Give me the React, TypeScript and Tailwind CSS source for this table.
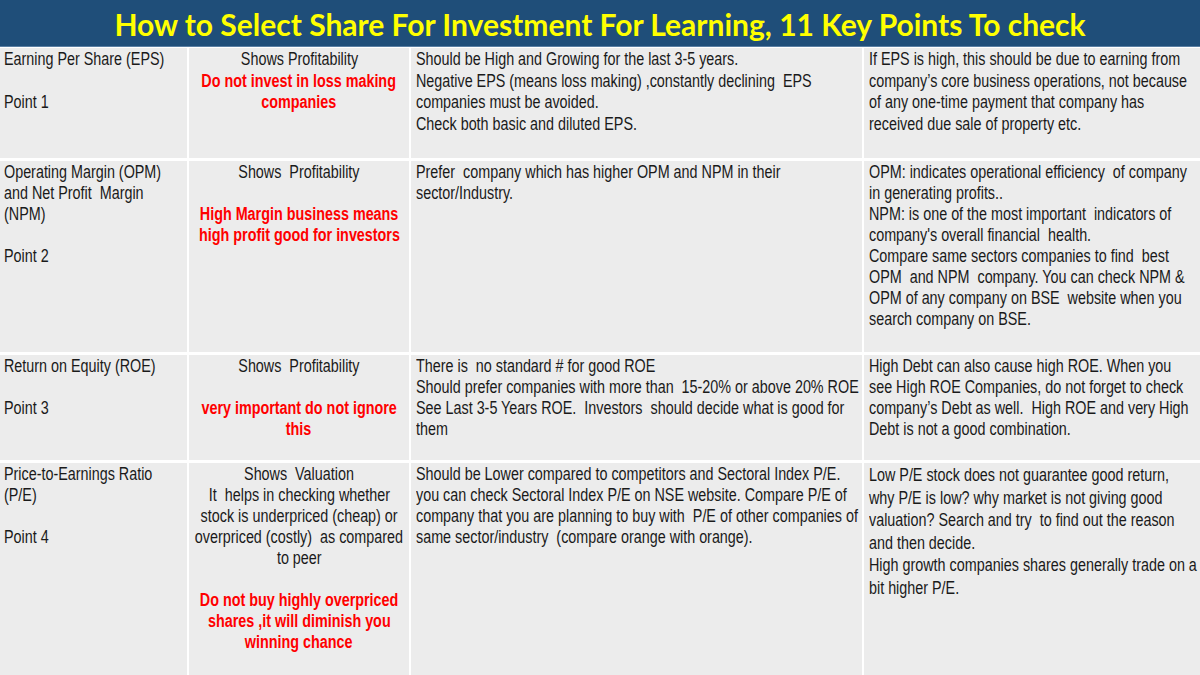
const body = '"Liberation Sans", Arial, sans-serif';

type Line = { t: string; red?: boolean };

const rows: { h: string; lh: string; lastLh?: string; cells: Line[][] }[] = [
  {
    h: "h-[110px]",
    lh: "leading-[21.5px]",
    cells: [
      [{ t: "Earning Per Share (EPS)" }, { t: "" }, { t: "Point 1" }],
      [
        { t: "Shows Profitability" },
        { t: "Do not invest in loss making", red: true },
        { t: "companies", red: true },
      ],
      [
        { t: "Should be High and Growing for the last 3-5 years." },
        { t: "Negative EPS (means loss making) ,constantly declining  EPS" },
        { t: "companies must be avoided." },
        { t: "Check both basic and diluted EPS." },
      ],
      [
        { t: "If EPS is high, this should be due to earning from" },
        { t: "company’s core business operations, not because" },
        { t: "of any one-time payment that company has" },
        { t: "received due sale of property etc." },
      ],
    ],
  },
  {
    h: "h-[191px]",
    lh: "leading-[21px]",
    cells: [
      [
        { t: "Operating Margin (OPM)" },
        { t: "and Net Profit  Margin" },
        { t: "(NPM)" },
        { t: "" },
        { t: "Point 2" },
      ],
      [
        { t: "Shows  Profitability" },
        { t: "" },
        { t: "High Margin business means", red: true },
        { t: "high profit good for investors", red: true },
      ],
      [
        { t: "Prefer  company which has higher OPM and NPM in their" },
        { t: "sector/Industry." },
      ],
      [
        { t: "OPM: indicates operational efficiency  of company" },
        { t: "in generating profits.." },
        { t: "NPM: is one of the most important  indicators of" },
        { t: "company's overall financial  health." },
        { t: "Compare same sectors companies to find  best" },
        { t: "OPM  and NPM  company. You can check NPM &" },
        { t: "OPM of any company on BSE  website when you" },
        { t: "search company on BSE." },
      ],
    ],
  },
  {
    h: "h-[105px]",
    lh: "leading-[21px]",
    cells: [
      [{ t: "Return on Equity (ROE)" }, { t: "" }, { t: "Point 3" }],
      [
        { t: "Shows  Profitability" },
        { t: "" },
        { t: "very important do not ignore", red: true },
        { t: "this", red: true },
      ],
      [
        { t: "There is  no standard # for good ROE" },
        { t: "Should prefer companies with more than  15-20% or above 20% ROE" },
        { t: "See Last 3-5 Years ROE.  Investors  should decide what is good for" },
        { t: "them" },
      ],
      [
        { t: "High Debt can also cause high ROE. When you" },
        { t: "see High ROE Companies, do not forget to check" },
        { t: "company’s Debt as well.  High ROE and very High" },
        { t: "Debt is not a good combination." },
      ],
    ],
  },
  {
    h: "flex-1",
    lh: "leading-[21px]",
    lastLh: "leading-[22.5px]",
    cells: [
      [{ t: "Price-to-Earnings Ratio" }, { t: "(P/E)" }, { t: "" }, { t: "Point 4" }],
      [
        { t: "Shows  Valuation" },
        { t: "It  helps in checking whether" },
        { t: "stock is underpriced (cheap) or" },
        { t: "overpriced (costly)  as compared" },
        { t: "to peer" },
        { t: "" },
        { t: "Do not buy highly overpriced", red: true },
        { t: "shares ,it will diminish you", red: true },
        { t: "winning chance", red: true },
      ],
      [
        { t: "Should be Lower compared to competitors and Sectoral Index P/E." },
        { t: "you can check Sectoral Index P/E on NSE website. Compare P/E of" },
        { t: "company that you are planning to buy with  P/E of other companies of" },
        { t: "same sector/industry  (compare orange with orange)." },
      ],
      [
        { t: "Low P/E stock does not guarantee good return," },
        { t: "why P/E is low? why market is not giving good" },
        { t: "valuation? Search and try  to find out the reason" },
        { t: "and then decide." },
        { t: "High growth companies shares generally trade on a" },
        { t: "bit higher P/E." },
      ],
    ],
  },
];

const widths = ["w-[187px] shrink-0", "w-[220px] shrink-0", "w-[451px] shrink-0", "flex-1 min-w-0"];

// the source uses a narrow face; squeeze regular Arial-width text to match
function Cell({ lines, idx, lh }: { lines: Line[]; idx: number; lh: string }) {
  const centered = idx === 1;
  return (
    <div
      className={`${widths[idx]} bg-[#ececec] pt-[1px] ${centered ? "" : idx === 0 ? "pl-[4px]" : "pl-[5px]"} ${lh}`}
    >
      {lines.map((l, i) => (
        <div key={i} className={`flex ${centered ? "justify-center" : "justify-start"}`}>
          <span
            className={`whitespace-pre shrink-0 scale-x-[0.82] ${centered ? "origin-center" : "origin-left"} ${
              l.red ? "text-[#ff0000] font-bold" : "text-[#1a1a1a]"
            }`}
          >
            {l.t === "" ? "\u00a0" : l.t}
          </span>
        </div>
      ))}
    </div>
  );
}

export default function App() {
  return (
    <div className="w-[1200px] h-[675px] flex flex-col bg-white overflow-hidden">
      <div className="h-[47px] bg-[#1f4e79] flex items-center justify-center border-b border-[#5a7fa3]">
        <h1
          className="text-[#ffff00] font-bold text-[30px] leading-none pt-[2px] whitespace-nowrap"
          style={{ fontFamily: '"Lato", "Open Sans", sans-serif' }}
        >
          How to Select Share For Investment For Learning, 11 Key Points To check
        </h1>
      </div>
      <div className="flex-1 flex flex-col gap-[3px] pt-[1px] text-[17.5px]" style={{ fontFamily: body }}>
        {rows.map((r, ri) => (
          <div key={ri} className={`${r.h} flex gap-[2px]`}>
            {r.cells.map((c, ci) => (
              <Cell key={ci} lines={c} idx={ci} lh={ci === 3 && r.lastLh ? r.lastLh : r.lh} />
            ))}
          </div>
        ))}
      </div>
    </div>
  );
}
